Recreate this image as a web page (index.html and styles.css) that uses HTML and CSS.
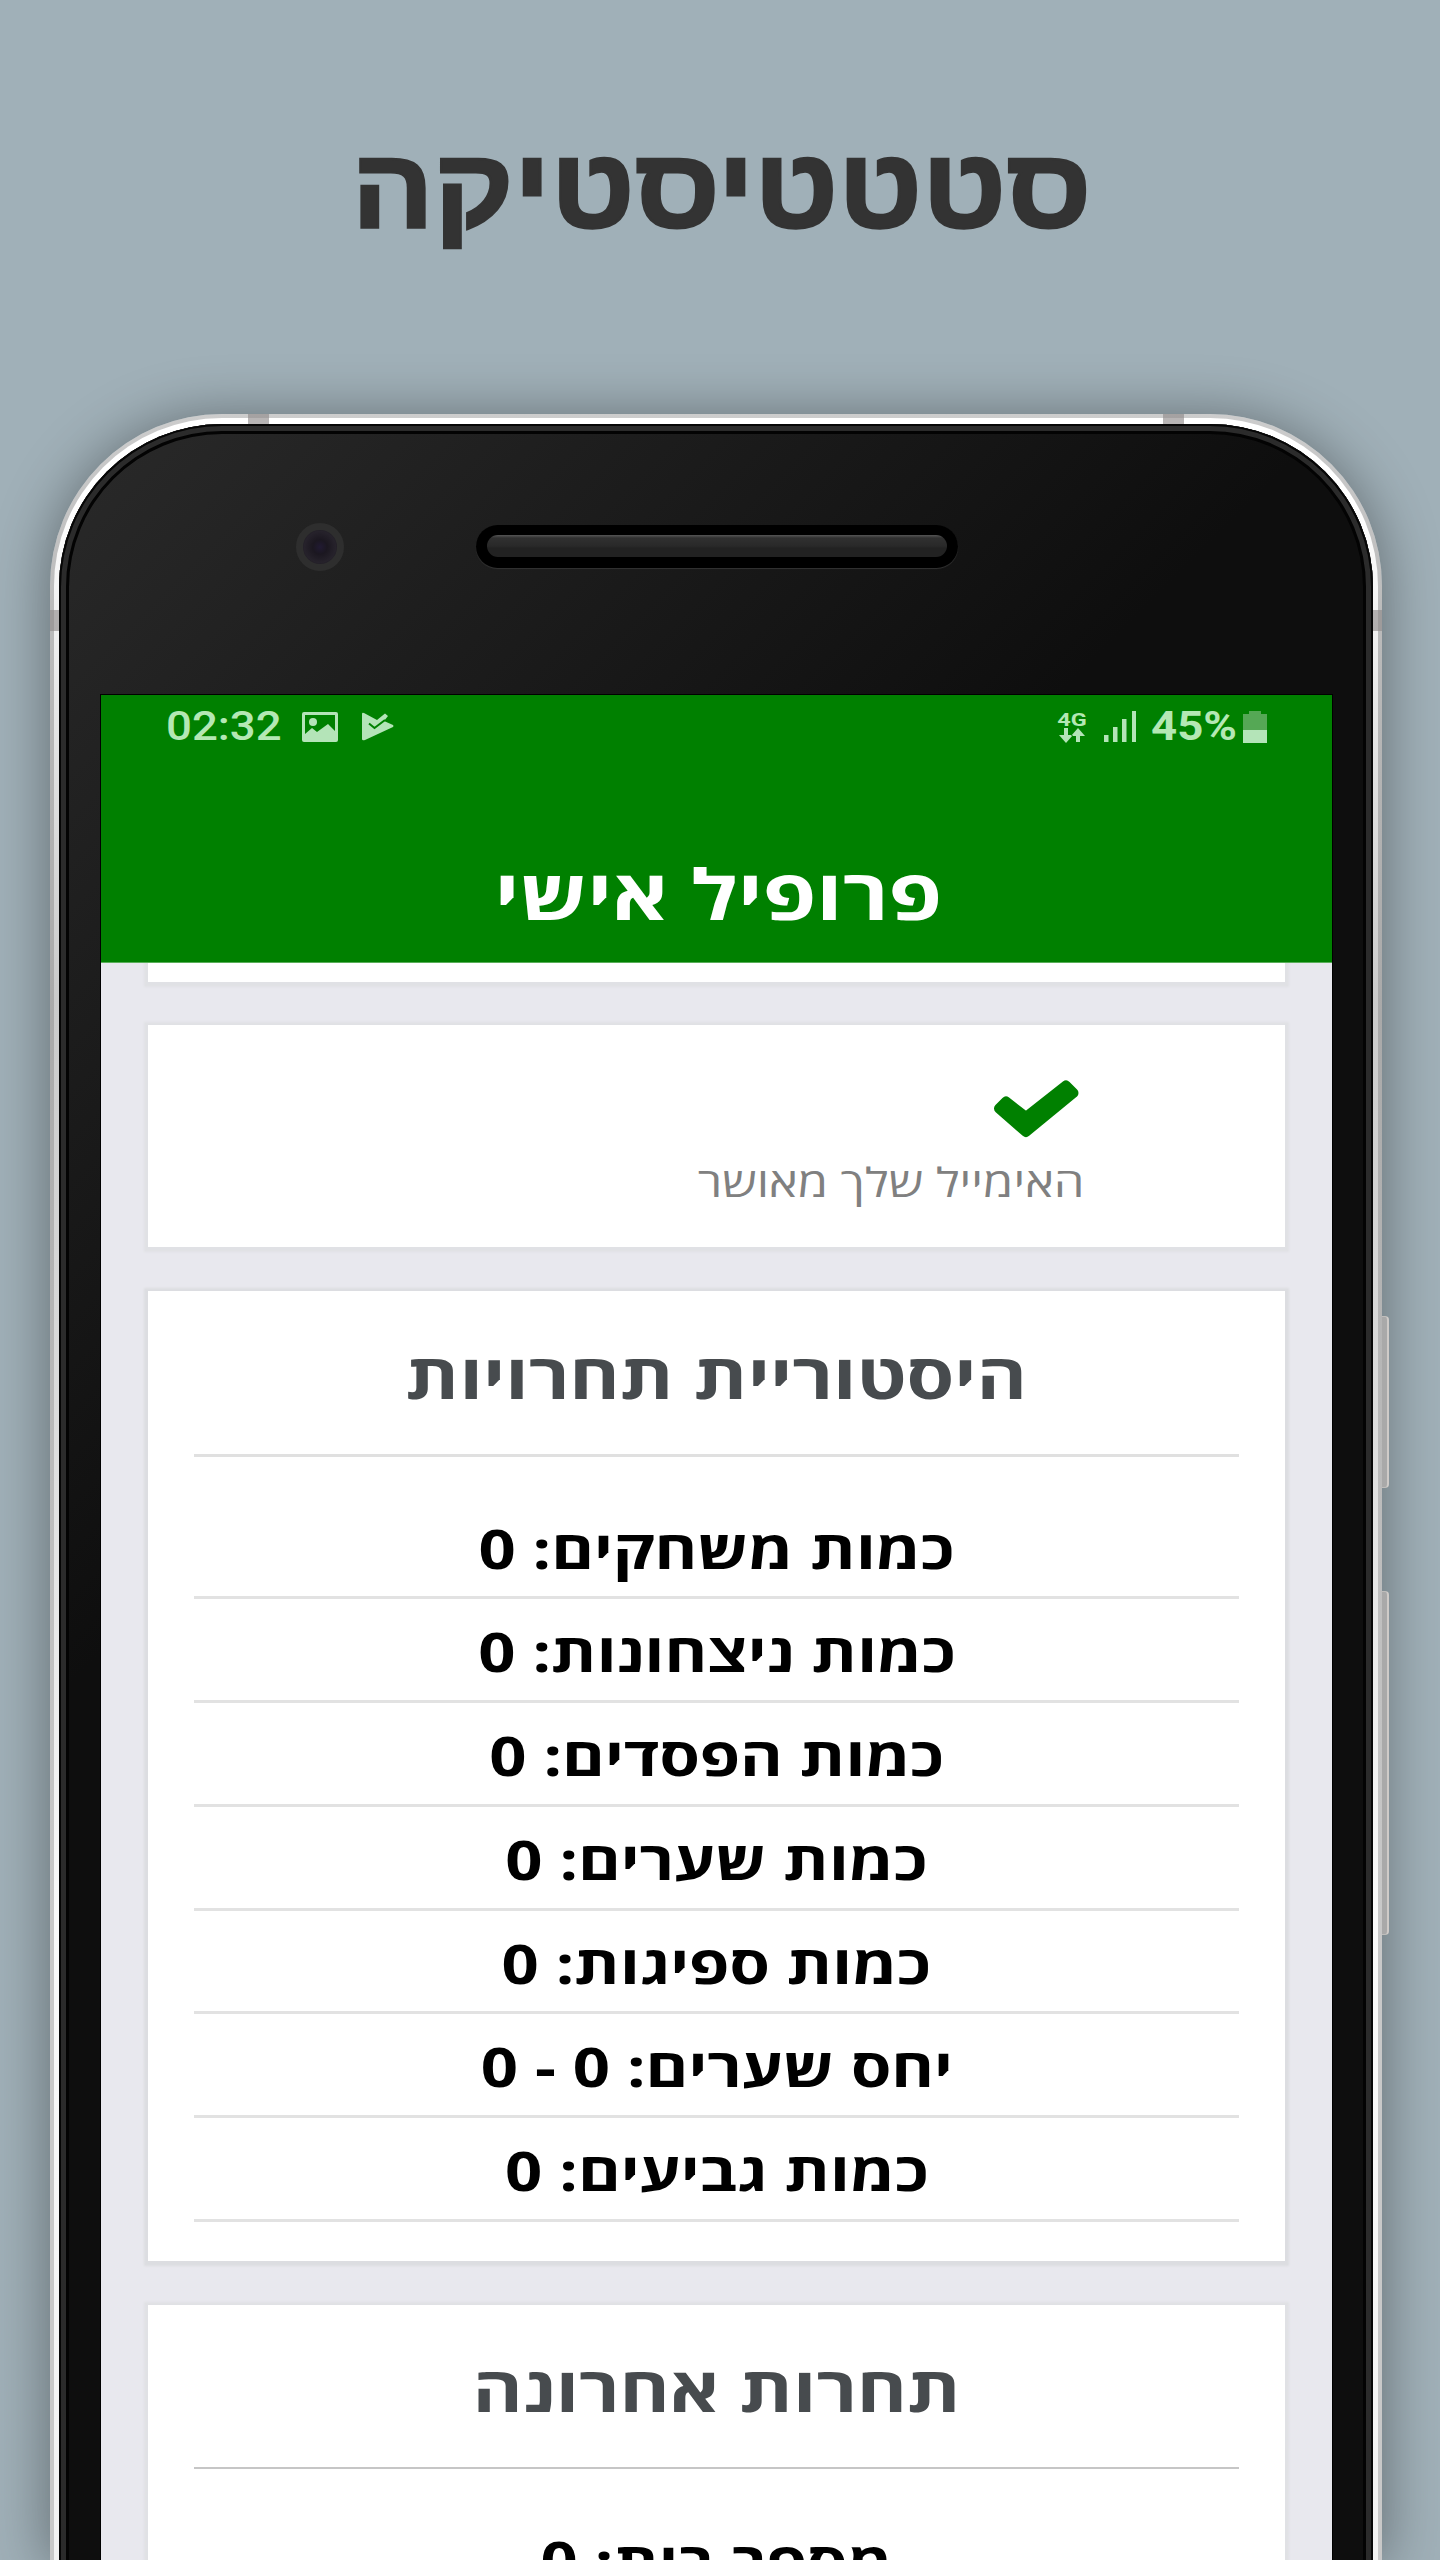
FILE: index.html
```html
<!DOCTYPE html>
<html lang="he" dir="rtl">
<head>
<meta charset="utf-8">
<title>סטטטיסטיקה</title>
<link rel="stylesheet" href="styles.css">
</head>
<body>
<h1 class="page-title"><span class="wide-title">סטטטיסטיקה</span></h1>
<div class="phone">
  <i class="band band-top-left"></i><i class="band band-top-right"></i>
  <i class="band band-left"></i><i class="band band-right"></i>
  <i class="side-button power"></i><i class="side-button volume"></i>
  <div class="rim">
    <div class="face">
      <div class="sensors" dir="ltr">
        <div class="camera"></div>
        <div class="speaker"><div class="grille"></div></div>
      </div>
      <div class="screen">
        <header class="app-header">
          <div class="status" dir="ltr">
            <span class="clock"><span class="wide-left">02:32</span></span>
            <svg class="photo" width="36" height="30" viewBox="0 0 36 30"><path fill-rule="evenodd" d="M2 0H34Q36 0 36 2V28Q36 30 34 30H2Q0 30 0 28V2Q0 0 2 0ZM3 3V22L10 16L15 20L26 12L33 19V3Z"/><circle cx="11" cy="10" r="4"/></svg>
            <svg class="play" width="32" height="29" viewBox="0 0 32 29"><path d="M2 1L15 8L23 1.500L26 4L22 9L31 13Q32 14 31 15L3 28Q0 29 0 27V2Q0 0 2 1Z"/><path class="cut" d="M7 11.500L12.500 16L23 8"/></svg>
            <div class="network">
              <span class="net-label"><span class="wide">4G</span></span>
              <svg width="27" height="15" viewBox="0 0 27 15"><path d="M6 0H10V7H15L8 15L1 7H6ZM18 14H22V8H27L20 0L13 8H18Z"/></svg>
            </div>
            <svg class="signal" width="32" height="31" viewBox="0 0 32 31"><path d="M0 24H4.500V31H0ZM9 16H13.500V31H9ZM18 8H22.500V31H18ZM28 0H32V31H28Z"/></svg>
            <span class="percent"><span class="wide-left">45%</span></span>
            <svg class="battery" width="24" height="32" viewBox="0 0 24 32"><path class="empty" d="M6 0H18V3H24V19H0V3H6Z"/><path d="M0 19H24V32H0Z"/></svg>
          </div>
          <h2 class="app-title"><span class="wide">פרופיל אישי</span></h2>
        </header>
        <main>
          <section class="card card-first"></section>
          <section class="card card-email">
            <svg class="tick" width="87" height="58" viewBox="0 0 87 58"><path d="M6 28.500L13 21.500L33 37L73 5.500L80.500 13L33 52Z"/></svg>
            <p class="email"><span class="wide-right">האימייל שלך מאושר</span></p>
          </section>
          <section class="card card-history">
            <h3><span class="wide">היסטוריית תחרויות</span></h3>
            <ul>
              <li><span class="wide">כמות משחקים: 0</span></li>
              <li><span class="wide">כמות ניצחונות: 0</span></li>
              <li><span class="wide">כמות הפסדים: 0</span></li>
              <li><span class="wide">כמות שערים: 0</span></li>
              <li><span class="wide">כמות ספיגות: 0</span></li>
              <li><span class="wide">יחס שערים: 0 - 0</span></li>
              <li><span class="wide">כמות גביעים: 0</span></li>
            </ul>
          </section>
          <section class="card card-last">
            <h3><span class="wide">תחרות אחרונה</span></h3>
            <ul><li><span class="wide">מספר בית: 0</span></li></ul>
          </section>
        </main>
      </div>
    </div>
  </div>
</div>
</body>
</html>
```
FILE: styles.css
```css
* { box-sizing: border-box; margin: 0; padding: 0; }
html, body { height: 2560px; overflow: hidden; }
body { width: 1440px; background: #a0b0b8; font-family: "Open Sans", sans-serif; }
svg { display: block; flex: none; }

.page-title { height: 370px; padding-left: 2px; color: #333; font: 700 113px/376px "Liberation Sans", sans-serif; text-align: center; -webkit-text-stroke: 2.5px #333; }
.wide-title { display: inline-block; transform: scaleX(1.08); }

/* device frame */
.phone { position: relative; width: 1332px; height: 2146px; margin: 44px 58px 0 50px; padding: 4px 4px 0; border-radius: 172px 172px 0 0; background: linear-gradient(#ccc, #bbb 200px, #a9a9a9 600px, #bcbcbc 1100px, #c8c8c8 1500px); box-shadow: 0 4px 56px 2px rgba(0, 0, 0, .38); }
.rim { height: 100%; padding: 6px 5px 0; border-radius: 168px 168px 0 0; overflow: hidden; background: linear-gradient(#fff 80px, #e8e8e8 280px, #cacaca 580px, #dcdcdc 1000px, #fafafa 1500px, #f2f2f2); }
.face { height: 2160px; border-radius: 163px 163px 0 0; padding: 0 41px; background: linear-gradient(135deg, #2a2a2a 0, #1e1e1e 380px, #0e0e0e 900px); box-shadow: inset 0 0 0 2px #060606, inset 0 0 0 7px #2b2b2b, inset 0 0 0 10px #030303; }
.band { position: absolute; background: rgba(140, 136, 135, .62); }
.band-top-left, .band-top-right { top: 0; width: 21px; height: 10px; }
.band-top-left { left: 198px; }
.band-top-right { left: 1113px; }
.band-left, .band-right { top: 196px; width: 9px; height: 21px; }
.band-left { left: 0; }
.band-right { right: 0; }
.side-button { position: absolute; left: 1332px; width: 7px; background: #a9a9a9; border: 1px solid #c0bebc; border-left: 0; border-right: 2px solid #cfcbc8; border-radius: 0 4px 4px 0; }
.power { top: 902px; height: 172px; }
.volume { top: 1177px; height: 344px; }

.sensors { display: flex; align-items: center; height: 271px; padding: 0 0 26px 196px; gap: 132px; }
.camera { width: 48px; height: 48px; border: 7px solid #2e2e2e; border-radius: 50%; background: radial-gradient(circle, #211a33 0, #1b1720 30%, #26222b 65%, #121015 100%); }
.speaker { width: 482px; height: 43px; padding: 10px 11px; border-radius: 22px; background: #000; box-shadow: 0 1px 1px #333; }
.grille { height: 22px; border-radius: 11px; background: linear-gradient(#555 0, #303030 3px, #292929 11px, #222 13px); }

/* app screen */
.screen { width: 1231px; height: 1865px; background: #e8e8ee; box-shadow: 0 0 0 1px #000; overflow: hidden; }
.app-header { position: relative; z-index: 1; height: 268px; background: #008000; border-bottom: 1px solid #59ae59; }
.status { display: flex; align-items: center; height: 63px; padding: 0 65px; color: #b4e8b4; fill: #b4e4b8; font: 500 40px/60px Roboto, sans-serif; }
.clock { width: 137px; }
.photo { margin-right: 24px; }
.cut { fill: none; stroke: #008000; stroke-width: 2; }
.network { width: 27px; margin: 0 19px 0 664px; }
.net-label { display: block; font: 700 19px/17px Roboto, sans-serif; text-align: center; }
.percent { width: 92px; padding-left: 15px; margin-right: 15px; font-weight: 700; }
.empty { fill: #55a855; }
.wide, .wide-left, .wide-right { display: inline-block; white-space: nowrap; transform: scaleX(1.235); }
.wide-left { transform: scaleX(1.14); transform-origin: left; }
.wide-right { transform: scaleX(1.222); transform-origin: right; }
.app-title { margin-top: 67px; padding-left: 4px; text-align: center; color: #fff; font-size: 70px; font-weight: 700; line-height: 136px; }

.card { width: 1137px; margin: 0 47px 44px; background: #fff; box-shadow: 0 1px 2px 4px #e0e1e5; }
.card-first { height: 19px; margin-bottom: 43px; }
.card-email { height: 222px; padding: 55px 205px 0 0; }
.tick { fill: #008000; stroke: #008000; stroke-width: 10; stroke-linejoin: round; }
.email { margin-right: -5px; color: #808080; font-size: 40px; line-height: 87px; text-align: right; }
.card-history, .card-last { padding: 10px 46px 0; }
.card-history { height: 970px; box-shadow: 0 1px 2px 4px #dcdde1; }
.card-last { height: 400px; padding-top: 9px; }
h3 { height: 153px; color: #474b4e; font-size: 62px; font-weight: 700; line-height: 149px; text-align: center; }
.card-history .wide { transform: scaleX(1.242); }
ul { list-style: none; padding-top: 38.5px; border-top: 3px solid #e0e0e0; }
.card-last ul { border-top: 2px solid #c6c6c6; }
li { height: 103.8px; border-bottom: 3px solid #e2e2e2; color: #000; font-size: 53.5px; font-weight: 700; line-height: 105px; text-align: center; }
.card li .wide { transform: scaleX(1.218); }
```
